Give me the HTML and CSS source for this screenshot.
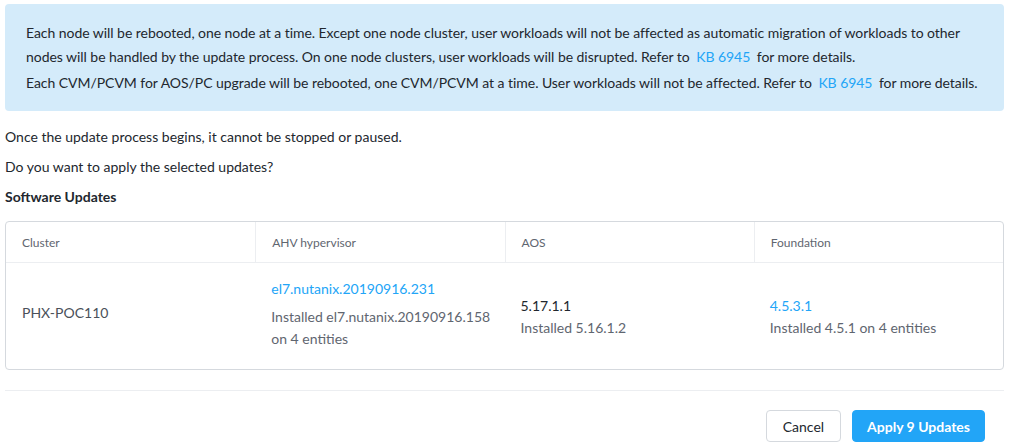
FILE: index.html
```html
<!DOCTYPE html>
<html>
<head>
<meta charset="utf-8">
<link rel="stylesheet" href="styles.css">
</head>
<body>
<div class="page">
  <div class="notice">
    <p>Each node will be rebooted, one node at a time. Except one node cluster, user workloads will not be affected as automatic migration of workloads to other nodes will be handled by the update process. On one node clusters, user workloads will be disrupted. Refer to <a class="link">KB 6945</a> for more details.</p>
    <p>Each CVM/PCVM for AOS/PC upgrade will be rebooted, one CVM/PCVM at a time. User workloads will not be affected. Refer to <a class="link">KB 6945</a> for more details.</p>
  </div>
  <p class="msg">Once the update process begins, it cannot be stopped or paused.</p>
  <p class="msg">Do you want to apply the selected updates?</p>
  <h3 class="title">Software Updates</h3>
  <div class="table">
    <div class="row head">
      <div class="cell">Cluster</div>
      <div class="cell">AHV hypervisor</div>
      <div class="cell">AOS</div>
      <div class="cell">Foundation</div>
    </div>
    <div class="row body">
      <div class="cell c-name"><span class="name">PHX-POC110</span></div>
      <div class="cell c-ahv">
        <div class="ver blue">el7.nutanix.20190916.231</div>
        <div class="inst">Installed el7.nutanix.20190916.158<br>on 4 entities</div>
      </div>
      <div class="cell c-ver">
        <div class="ver">5.17.1.1</div>
        <div class="inst">Installed 5.16.1.2</div>
      </div>
      <div class="cell c-ver">
        <div class="ver blue">4.5.3.1</div>
        <div class="inst">Installed 4.5.1 on 4 entities</div>
      </div>
    </div>
  </div>
  <div class="footer">
    <button class="btn cancel">Cancel</button>
    <button class="btn primary">Apply 9 Updates</button>
  </div>
</div>
</body>
</html>
```
FILE: styles.css
```css
* { box-sizing: border-box; }
html, body { margin: 0; padding: 0; background: #fff; }
body {
  font-family: Lato, "Open Sans", sans-serif;
  font-size: 14px;
  color: #22272e;
}
.page { padding: 4px 5px 0 5px; }
p { margin: 0; }
.notice {
  background: #d4ebfa;
  border-radius: 4px;
  padding: 17px 8px 17px 21px;
  line-height: 23.5px;
  letter-spacing: -0.05px;
}
.notice p + p { margin-top: 2.5px; }
.link { color: #22a5f7; text-decoration: none; margin: 0 3px; }
.msg { margin-top: 18px; line-height: 15px; }
.msg + .msg { margin-top: 15px; }
.title { margin: 15px 0 0 0; font-size: 14px; font-weight: 700; line-height: 15px; }
.table {
  margin-top: 17px;
  border: 1px solid #d5d9de;
  border-radius: 4px;
}
.row { display: grid; grid-template-columns: repeat(4, 1fr); }
.head { height: 41px; border-bottom: 1px solid #eceef1; }
.head .cell {
  font-size: 12px;
  color: #5f6670;
  display: flex;
  align-items: center;
  padding-left: 16px;
  border-left: 1px solid #eceef1;
}
.head .cell:first-child { border-left: none; }
.body { height: 106px; }
.body .cell {
  display: flex;
  flex-direction: column;
  justify-content: center;
  padding-left: 16px;
  color: #5f6670;
}
.c-name { padding-bottom: 7px; }
.c-ahv { padding-bottom: 3px; }
.c-ver { padding-top: 3px; }
.name { color: #4a5059; }
.ver { color: #22272e; line-height: 18px; }
.c-ahv .ver { margin-bottom: 8px; }
.c-ver .ver { margin-bottom: 2px; }
.ver.blue { color: #22a5f7; }
.inst { line-height: 22px; }
.footer {
  margin-top: 20px;
  border-top: 1px solid #eceef1;
  padding: 19px 19px 0 0;
  display: flex;
  justify-content: flex-end;
  gap: 11px;
}
.btn {
  font-family: inherit;
  font-size: 14px;
  height: 32px;
  border-radius: 4px;
  padding: 0 14px;
  white-space: nowrap;
}
.cancel { background: #fff; border: 1px solid #d5d9de; color: #22272e; padding: 0 16px; }
.primary { background: #22a5f7; border: 1px solid #22a5f7; color: #fff; font-weight: 700; }
```
